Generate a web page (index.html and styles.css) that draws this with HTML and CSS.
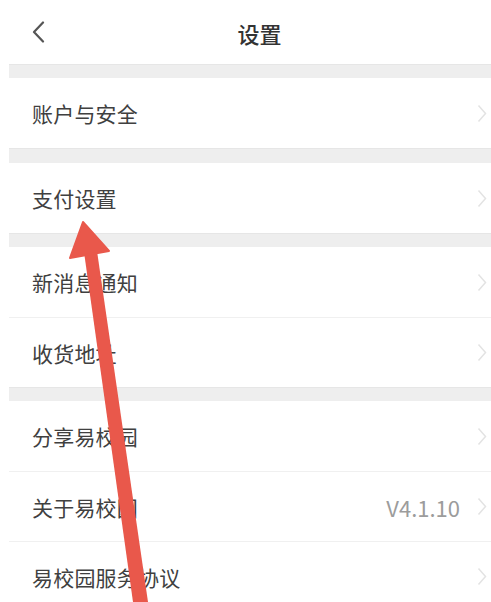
FILE: index.html
```html
<!DOCTYPE html>
<html lang="zh-CN">
<head>
<meta charset="utf-8">
<title>设置</title>
<link rel="stylesheet" href="styles.css">
</head>
<body>
<div class="screen">
  <header class="topbar">
    <span class="back">
      <svg width="13" height="22" viewBox="0 0 13 22"><path d="M11 1.5 L2 11 L11 20.5" fill="none" stroke="#555" stroke-width="2.2" stroke-linecap="round" stroke-linejoin="round"/></svg>
    </span>
    <h1 class="title">设置</h1>
    <span class="back-spacer"></span>
  </header>

  <div class="gap"></div>
  <div class="group">
    <div class="row"><span class="label">账户与安全</span><span class="chev"><svg width="10" height="19" viewBox="0 0 10 19"><path d="M1.5 1.5 L8.5 9.5 L1.5 17.5" fill="none" stroke="#e3e3e3" stroke-width="1.5"/></svg></span></div>
  </div>

  <div class="gap gap-15"></div>
  <div class="group">
    <div class="row"><span class="label">支付设置</span><span class="chev"><svg width="10" height="19" viewBox="0 0 10 19"><path d="M1.5 1.5 L8.5 9.5 L1.5 17.5" fill="none" stroke="#e3e3e3" stroke-width="1.5"/></svg></span></div>
  </div>

  <div class="gap"></div>
  <div class="group">
    <div class="row"><span class="label">新消息通知</span><span class="chev"><svg width="10" height="19" viewBox="0 0 10 19"><path d="M1.5 1.5 L8.5 9.5 L1.5 17.5" fill="none" stroke="#e3e3e3" stroke-width="1.5"/></svg></span></div>
    <div class="row"><span class="label">收货地址</span><span class="chev"><svg width="10" height="19" viewBox="0 0 10 19"><path d="M1.5 1.5 L8.5 9.5 L1.5 17.5" fill="none" stroke="#e3e3e3" stroke-width="1.5"/></svg></span></div>
  </div>

  <div class="gap"></div>
  <div class="group">
    <div class="row"><span class="label">分享易校园</span><span class="chev"><svg width="10" height="19" viewBox="0 0 10 19"><path d="M1.5 1.5 L8.5 9.5 L1.5 17.5" fill="none" stroke="#e3e3e3" stroke-width="1.5"/></svg></span></div>
    <div class="row"><span class="label">关于易校园</span><span class="value">V4.1.10</span><span class="chev"><svg width="10" height="19" viewBox="0 0 10 19"><path d="M1.5 1.5 L8.5 9.5 L1.5 17.5" fill="none" stroke="#e3e3e3" stroke-width="1.5"/></svg></span></div>
    <div class="row"><span class="label">易校园服务协议</span><span class="chev"><svg width="10" height="19" viewBox="0 0 10 19"><path d="M1.5 1.5 L8.5 9.5 L1.5 17.5" fill="none" stroke="#e3e3e3" stroke-width="1.5"/></svg></span></div>
  </div>
</div>

<svg class="arrow" width="491" height="602" viewBox="0 0 491 602">
  <polygon points="84,252 97,251 148,602 133,602" fill="#e9584b"/>
  <polygon points="83,222 70,258 109,251" fill="#e9584b" stroke="#e9584b" stroke-width="2" stroke-linejoin="round"/>
</svg>
</body>
</html>
```

FILE: styles.css
```css
html, body {
  margin: 0;
  padding: 0;
  background: #ffffff;
}
body {
  width: 491px;
  height: 602px;
  overflow: hidden;
  position: relative;
  font-family: "Noto Sans CJK SC", "Noto Sans", sans-serif;
  color: #3a3a3a;
}
.screen {
  margin-left: 9px;
  width: 500px;
}
.topbar {
  height: 64px;
  display: flex;
  align-items: center;
  justify-content: space-between;
  padding: 0 22px 0 23px;
  background: #fff;
}
.back, .back-spacer {
  width: 40px;
  display: flex;
  align-items: center;
}
.title {
  margin: 0;
  font-size: 22px;
  font-weight: 500;
  color: #333;
  line-height: 1;
  padding-top: 2px;
}
.gap {
  height: 14px;
  background: #eeeeee;
  border-top: 1px solid #e6e6e6;
  box-sizing: border-box;
}
.gap-15 {
  height: 15px;
}
.group {
  background: #fff;
}
.row {
  height: 70px;
  box-sizing: border-box;
  display: flex;
  align-items: center;
  padding: 0 22px 0 23px;
}
.row + .row {
  border-top: 1px solid #f0f0f0;
}
.label {
  flex: 1;
  font-size: 21px;
  color: #404040;
  letter-spacing: 0.2px;
}
.value {
  font-size: 22px;
  color: #9c9c9c;
  margin-right: 17px;
}
.chev {
  display: flex;
  align-items: center;
}
.arrow {
  position: absolute;
  left: 0;
  top: 0;
  pointer-events: none;
}
```
